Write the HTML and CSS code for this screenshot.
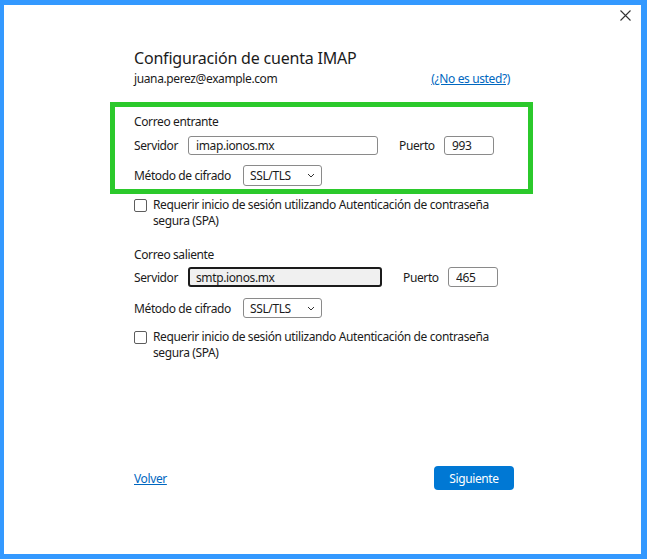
FILE: index.html
```html
<!DOCTYPE html>
<html lang="es">
<head>
    <meta charset="UTF-8">
    <meta name="viewport" content="width=device-width, initial-scale=1.0">
    <title>Configuración de cuenta IMAP</title>
    <link rel="stylesheet" href="styles.css">
</head>
<body>
    <div class="window">
        <button class="close" aria-label="Cerrar">
            <svg width="11" height="11" viewBox="0 0 11 11"><path d="M0.5 0.5L10.5 10.5M10.5 0.5L0.5 10.5" stroke="#333" stroke-width="1.1" fill="none"/></svg>
        </button>

        <div class="content">
            <h1>Configuración de cuenta IMAP</h1>
            <div class="account">
                <span>juana.perez@example.com</span>
                <a href="#">(¿No es usted?)</a>
            </div>

            <section class="incoming">
                <h2>Correo entrante</h2>
                <div class="field-row">
                    <label class="label-server">Servidor</label>
                    <input class="server" type="text" value="imap.ionos.mx">
                    <label class="label-port">Puerto</label>
                    <input class="port" type="text" value="993">
                </div>
                <div class="field-row method">
                    <label class="label-method">Método de cifrado</label>
                    <div class="select">
                        <span>SSL/TLS</span>
                        <svg width="8" height="5" viewBox="0 0 8 5"><path d="M1 1L4 4L7 1" stroke="#333" stroke-width="1" fill="none"/></svg>
                    </div>
                </div>
            </section>

            <label class="check">
                <span class="box"></span>
                <span class="check-text">Requerir inicio de sesión utilizando Autenticación de contraseña segura (SPA)</span>
            </label>

            <section class="outgoing">
                <h2>Correo saliente</h2>
                <div class="field-row">
                    <label class="label-server">Servidor</label>
                    <input class="server focused" type="text" value="smtp.ionos.mx">
                    <label class="label-port">Puerto</label>
                    <input class="port" type="text" value="465">
                </div>
                <div class="field-row method">
                    <label class="label-method">Método de cifrado</label>
                    <div class="select">
                        <span>SSL/TLS</span>
                        <svg width="8" height="5" viewBox="0 0 8 5"><path d="M1 1L4 4L7 1" stroke="#333" stroke-width="1" fill="none"/></svg>
                    </div>
                </div>
            </section>

            <label class="check">
                <span class="box"></span>
                <span class="check-text">Requerir inicio de sesión utilizando Autenticación de contraseña segura (SPA)</span>
            </label>

            <div class="footer">
                <a href="#">Volver</a>
                <button class="next">Siguiente</button>
            </div>
        </div>
    </div>
</body>
</html>
```

FILE: styles.css
```css
* {
    box-sizing: border-box;
}
body {
    margin: 0;
    font-family: "Segoe UI", "Noto Sans", sans-serif;
    font-size: 12px;
    letter-spacing: -0.38px;
    color: #1b1b1b;
}
.window {
    position: relative;
    height: 559px;
    background: #fff;
    border-style: solid;
    border-color: #3399ff;
    border-width: 5px 6px 5px 4px;
}
.close {
    position: absolute;
    top: 5px;
    right: 10px;
    padding: 0;
    border: none;
    background: none;
    line-height: 0;
}
.content {
    width: 380px;
    margin-left: 130px;
    padding-top: 43px;
}
h1 {
    margin: 0;
    font-size: 16px;
    font-weight: normal;
    letter-spacing: -0.2px;
    line-height: 20px;
}
h2 {
    margin: 0;
    font-size: 12px;
    font-weight: normal;
    line-height: 16px;
}
a {
    color: #0067c0;
}
.account {
    display: flex;
    justify-content: space-between;
    margin-top: 3px;
    padding-right: 4px;
    line-height: 16px;
}
.incoming {
    margin: 15px -19px 0 -24px;
    padding: 7px 14px 3px 19px;
    border: 5px solid #2bc92b;
}
.field-row {
    display: flex;
    align-items: center;
    height: 19px;
    margin-top: 6px;
}
.field-row.method {
    height: 21px;
    margin-top: 10px;
}
.label-server {
    width: 54px;
}
.label-port {
    width: 45px;
    margin-left: 21px;
}
.label-method {
    width: 109px;
}
input {
    height: 100%;
    padding: 0 7px;
    font: inherit;
    letter-spacing: inherit;
    color: #1b1b1b;
    border: 1px solid #8a8a8a;
    border-radius: 3px;
    background: #fff;
}
.server {
    width: 190px;
}
.port {
    width: 50px;
}
.server.focused {
    width: 194px;
    padding: 0 6px;
    border: 2px solid #1b1b1b;
    background: #f0f0f0;
}
.select {
    display: flex;
    align-items: center;
    justify-content: space-between;
    width: 79px;
    height: 100%;
    padding: 0 6px 0 6px;
    border: 1px solid #8a8a8a;
    border-radius: 3px;
}
.check {
    display: flex;
    margin-top: 3px;
    line-height: 16px;
}
.box {
    flex: none;
    width: 13px;
    height: 13px;
    margin-top: 2px;
    margin-right: 6px;
    border: 1px solid #5d5d5d;
    border-radius: 2px;
}
.check-text {
    width: 360px;
}
.outgoing {
    margin-top: 18px;
}
.outgoing .field-row {
    height: 20px;
    margin-top: 4px;
}
.outgoing .field-row.method {
    height: 20px;
    margin-top: 11px;
}
.outgoing + .check {
    margin-top: 11px;
}
.footer {
    display: flex;
    align-items: center;
    justify-content: space-between;
    margin-top: 105px;
}
.next {
    width: 80px;
    height: 24px;
    font: inherit;
    letter-spacing: inherit;
    color: #fff;
    border: none;
    border-radius: 4px;
    background: #0078d4;
}
```
